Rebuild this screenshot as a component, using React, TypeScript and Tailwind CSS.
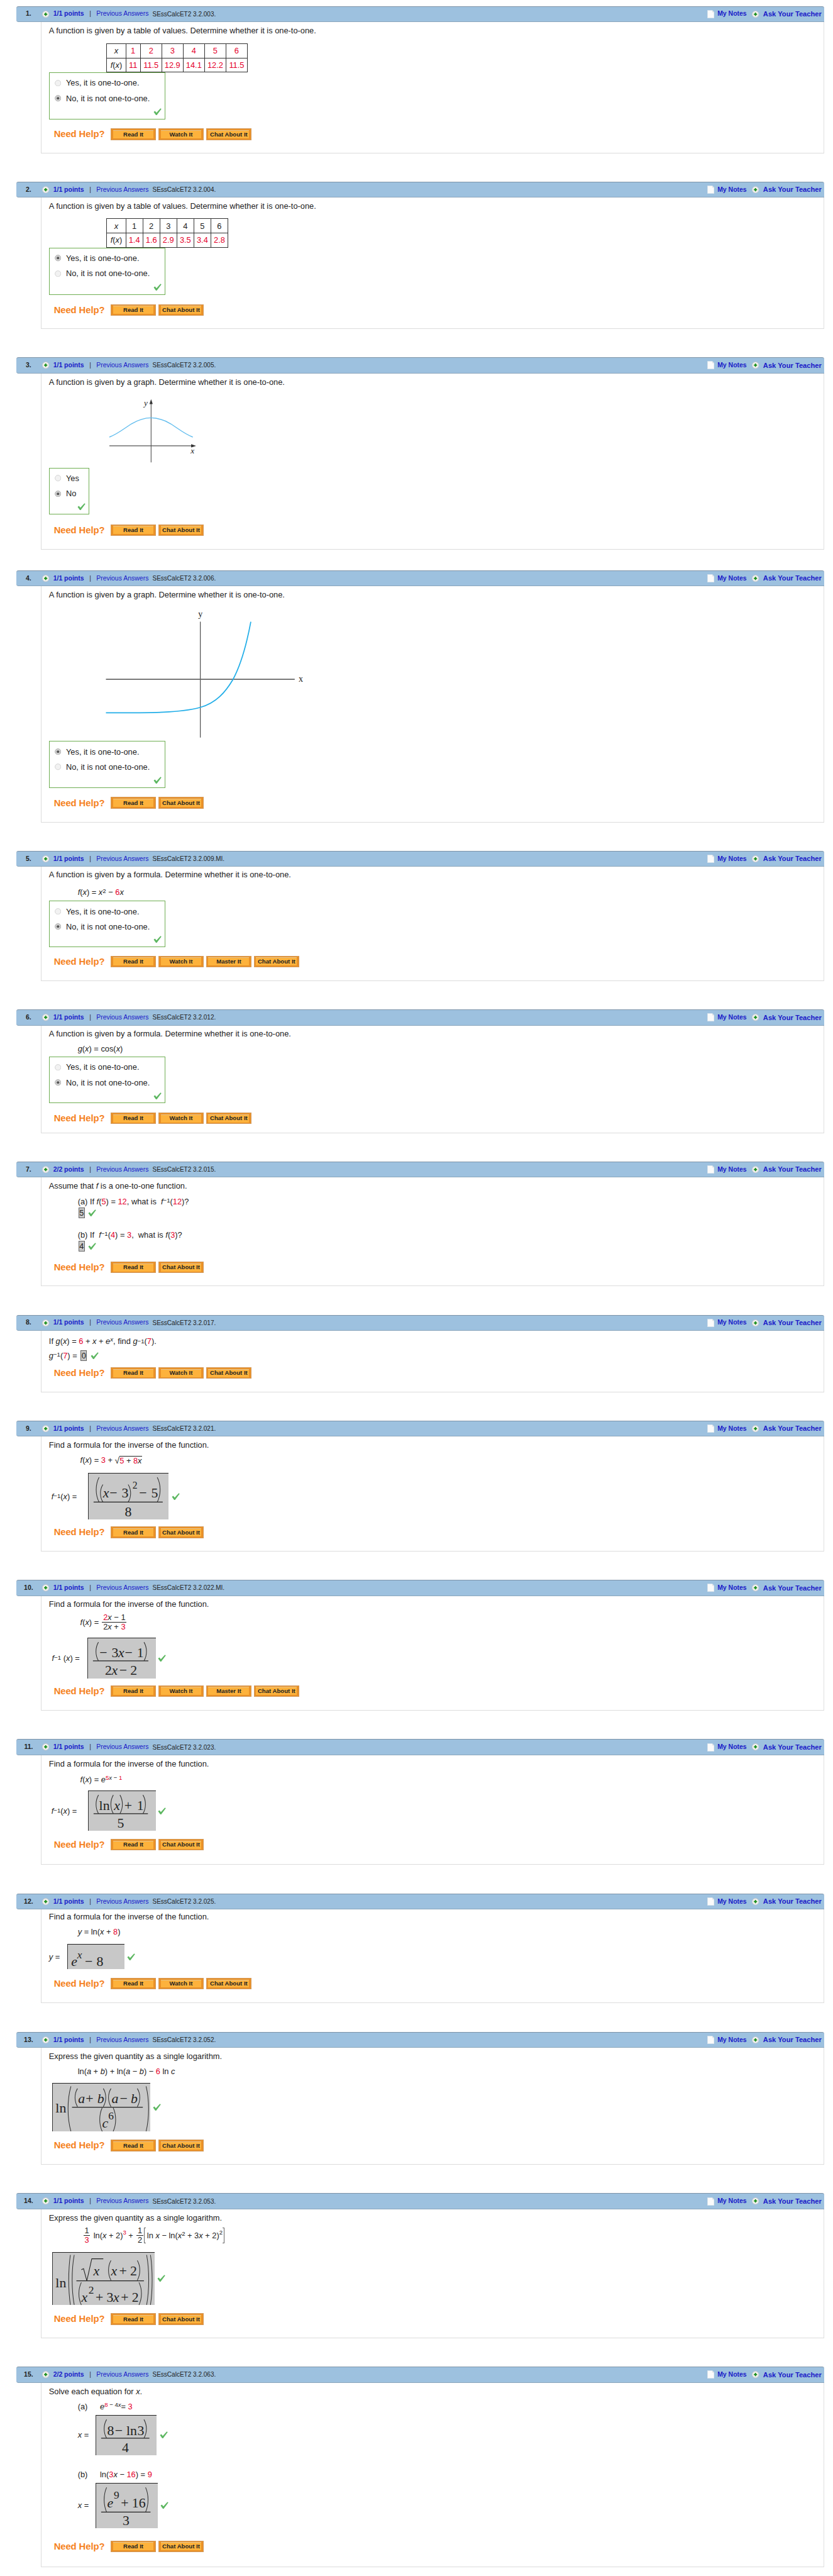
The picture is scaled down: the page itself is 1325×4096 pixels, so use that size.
import React, { FC, ReactNode } from "react";

const R: FC<{ children: ReactNode }> = ({ children }) => <span className="text-[#e4002b]">{children}</span>;
const I: FC<{ children: ReactNode }> = ({ children }) => <i>{children}</i>;

const PlusIcon = () => (
  <svg width="13" height="13" viewBox="0 0 13 13" className="shrink-0">
    <circle cx="6.5" cy="6.5" r="6" fill="#f1f1f1" stroke="#c4c4c4" />
    <path d="M6.5 3.5v6M3.5 6.5h6" stroke="#118a11" strokeWidth="2" />
  </svg>
);

const NoteIcon = () => (
  <svg width="13" height="15" viewBox="0 0 13 15" className="shrink-0">
    <path d="M0.5 0.5H9L12.5 4V14.5H0.5Z" fill="#fbfbfb" stroke="#d8e2ea" />
    <path d="M9 0.5V4H12.5" fill="#e4e4e4" />
  </svg>
);

const Check = () => (
  <svg width="15" height="13" viewBox="0 0 15 13" className="shrink-0">
    <path d="M0.5 7L3 5.3L5.6 8.2L13 0.3L14.6 1.4L6.2 12.6H4.6Z" fill="#5db761" />
  </svg>
);

const Radio: FC<{ on?: boolean }> = ({ on }) => (
  <svg width="12" height="12" viewBox="0 0 12 12" className="shrink-0">
    <circle cx="6" cy="6" r="5.3" fill={on ? "#d2d2d2" : "#f2f2f2"} stroke={on ? "#a8a8a8" : "#cfcfcf"} />
    {on && <circle cx="6" cy="6" r="2.4" fill="#555" />}
  </svg>
);

const Choices: FC<{ items: string[]; selected: number; className?: string }> = ({ items, selected, className = "" }) => (
  <div className={`relative border border-[#6fae52] pl-[9px] pt-[8px] ${className}`}>
    {items.map((t, i) => (
      <div key={t} className={`flex h-[20px] items-center gap-[9px] ${i > 0 ? "mt-[8px]" : ""}`}>
        <Radio on={i === selected} />
        <span>{t}</span>
      </div>
    ))}
    <div className="absolute bottom-[6px] right-[6px]">
      <Check />
    </div>
  </div>
);

const Help: FC<{ buttons: string[]; className?: string }> = ({ buttons, className = "" }) => (
  <div className={`ml-[9px] flex h-[21px] items-center ${className}`}>
    <span className="w-[103.5px] text-[17px] font-bold tracking-[-0.1px] text-[#f5821f]">Need Help?</span>
    <div className="flex gap-[4.5px]">
      {buttons.map((b) => (
        <div key={b} className="h-[21px] w-[82.5px] border border-[#d39a5c] bg-[#ea9127] px-[3px] py-[2px]">
          <div className="flex h-full items-center justify-center border-t border-[#e6c48f] bg-[#fdb23c] text-[11px] font-bold text-[#222]">
            {b}
          </div>
        </div>
      ))}
    </div>
  </div>
);

const Question: FC<{ num: number; pts: string; code: string; bodyClass: string; className?: string; children: ReactNode }> = ({
  num,
  pts,
  code,
  bodyClass,
  className = "mb-[52px]",
  children,
}) => (
  <div className={className}>
    <div className="flex h-[29px] items-center rounded-t-[4px] rounded-bl-[4px] border-t-2 border-b-2 border-t-[#7e94a8] border-b-[#8ba6bc] bg-[#9dc1df]">
      <span className="w-[44px] text-center text-[12px] font-bold text-[#222]">{num}.</span>
      <span className="ml-[3px]">
        <PlusIcon />
      </span>
      <span className="ml-[7px] w-[66px] text-[12px] font-bold text-[#1a1ac8]">{pts}</span>
      <span className="w-[12.5px] text-[12px] text-[#333]">|</span>
      <span className="text-[12px] text-[#1a1ac8]">Previous Answers</span>
      <span className="ml-[7px] text-[11.5px] text-[#222]">{code}</span>
      <div className="ml-auto flex items-center pr-[5px]">
        <NoteIcon />
        <span className="ml-[6px] text-[12px] font-bold text-[#1a1ac8]">My Notes</span>
        <span className="ml-[10px]">
          <PlusIcon />
        </span>
        <span className="ml-[7px] text-[12.8px] font-bold text-[#1a1ac8]">Ask Your Teacher</span>
      </div>
    </div>
    <div className={`ml-[45px] border-r border-b-2 border-l-2 border-r-[#e0e0e0] border-b-[#dcdcdc] border-l-[#dcdcdc] pl-[13px] ${bodyClass}`}>
      {children}
    </div>
  </div>
);

const Values: FC<{ x: string[]; y: string[]; wide?: boolean; x1Red?: boolean }> = ({ x, y, wide, x1Red }) => {
  const cell = "h-[26px] border border-[#333] p-0 text-center";
  return (
    <table className="ml-[105px] table-fixed border-collapse border-2 border-[#333]">
      <tbody>
        <tr>
          <td className={`${cell} w-[34.5px]`}>
            <I>x</I>
          </td>
          {x.map((v, i) => (
            <td key={v} className={`${cell} ${wide ? (i === 0 ? "w-[26.5px]" : "w-[39px]") : "w-[31px]"} ${x1Red ? "text-[#e4002b]" : ""}`}>
              {v}
            </td>
          ))}
        </tr>
        <tr>
          <td className={cell}>
            <I>f</I>(<I>x</I>)
          </td>
          {y.map((v, i) => (
            <td key={i} className={`${cell} text-[#e4002b]`}>
              {v}
            </td>
          ))}
        </tr>
      </tbody>
    </table>
  );
};

// formula pictures: coordinates are px inside the gray answer box
const T: FC<{ x: number; y: number; i?: boolean; s?: number; children: ReactNode }> = ({ x, y, i, s = 25, children }) => (
  <text x={x} y={y} fontSize={s} fontStyle={i ? "italic" : "normal"} fontFamily="Liberation Serif, serif" fill="#222">
    {children}
  </text>
);

const P: FC<{ x: number; a: number; b: number; w?: number; right?: boolean }> = ({ x, a, b, w = 6, right }) => {
  const h = b - a;
  const d = right
    ? `M${x} ${a}C${x + w} ${a + h * 0.3} ${x + w} ${a + h * 0.7} ${x} ${b}`
    : `M${x + w} ${a}C${x} ${a + h * 0.3} ${x} ${a + h * 0.7} ${x + w} ${b}`;
  return <path d={d} fill="none" stroke="#333" strokeWidth="1.2" />;
};

const L: FC<{ a: number; b: number; y: number }> = ({ a, b, y }) => <path d={`M${a} ${y}H${b}`} stroke="#222" strokeWidth="1.4" />;

const Box: FC<{ w: number; h: number; wc: string; children: ReactNode }> = ({ w, h, wc, children }) => (
  <div className={`shrink-0 border-t-2 border-l border-t-[#222] border-l-[#333] bg-[#c8c8c8] ${wc}`}>
    <svg width={w} height={h} viewBox={`0 0 ${w} ${h}`} className="block overflow-visible">
      {children}
    </svg>
  </div>
);

const Small: FC<{ children: ReactNode; className?: string }> = ({ children, className = "" }) => (
  <span className={`inline-flex h-[20px] w-[12px] items-center justify-center border border-[#666] bg-[#c8c8c8] ${className}`}>{children}</span>
);

const Inv: FC<{ g?: boolean }> = ({ g }) => (
  <>
    <I>{g ? "g" : "f"}</I>
    <sup className="top-[-2px]">−1</sup>
  </>
);

const Frac: FC<{ a: ReactNode; b: ReactNode; className?: string }> = ({ a, b, className = "" }) => (
  <span className={`mx-[2px] inline-flex flex-col items-center text-center leading-[14px] ${className}`}>
    <span className="w-full border-b border-[#222] px-[2px] pb-[1px]">{a}</span>
    <span className="pt-[1px]">{b}</span>
  </span>
);

const one = "A function is given by a table of values. Determine whether it is one-to-one.";
const graphQ = "A function is given by a graph. Determine whether it is one-to-one.";
const formulaQ = "A function is given by a formula. Determine whether it is one-to-one.";
const inverseQ = "Find a formula for the inverse of the function.";
const logQ = "Express the given quantity as a single logarithm.";
const yesNo = ["Yes, it is one-to-one.", "No, it is not one-to-one."];

const line = "h-[16px] leading-[16px]";
const eq = "ml-[52.5px] flex h-[20px] items-center whitespace-pre";

export default function App() {
  return (
    <div className="w-[1517px] pt-[11px] pr-[15px] pb-[16px] pl-[30px] font-['Liberation_Sans',sans-serif] text-[14.7px] text-[#222] [zoom:0.873]">
      <Question num={1} pts="1/1 points" code="SEssCalcET2 3.2.003." bodyClass="h-[239px]">
        <div className={`pt-[8px] ${line} box-content`}>{one}</div>
        <div className="mt-[15px]">
          <Values wide x1Red x={["1", "2", "3", "4", "5", "6"]} y={["11", "11.5", "12.9", "14.1", "12.2", "11.5"]} />
        </div>
        <Choices items={yesNo} selected={1} className="h-[85px] w-[212px]" />
        <Help className="mt-[17px]" buttons={["Read It", "Watch It", "Chat About It"]} />
      </Question>

      <Question num={2} pts="1/1 points" code="SEssCalcET2 3.2.004." bodyClass="h-[239px]">
        <div className={`pt-[8px] ${line} box-content`}>{one}</div>
        <div className="mt-[14px]">
          <Values x={["1", "2", "3", "4", "5", "6"]} y={["1.4", "1.6", "2.9", "3.5", "3.4", "2.8"]} />
        </div>
        <Choices items={yesNo} selected={0} className="h-[86px] w-[212px]" />
        <Help className="mt-[17px]" buttons={["Read It", "Chat About It"]} />
      </Question>

      <Question num={3} pts="1/1 points" code="SEssCalcET2 3.2.005." bodyClass="h-[321px]" className="mb-[38px]">
        <div className={`pt-[8px] ${line} box-content`}>{graphQ}</div>
        <svg width="165" height="118" viewBox="0 0 165 118" className="mt-[21px] ml-[110px] block overflow-visible">
          <path d="M76 8V117" stroke="#555" strokeWidth="1.3" />
          <path d="M76 2L73 11H79Z" fill="#333" />
          <path d="M0 87H150" stroke="#555" strokeWidth="1.5" />
          <path d="M158 87L149 84V90Z" fill="#333" />
          <path d="M0 71C14 66 26 56 40 47C52 40 62 36 76 36C90 36 100 40 112 47C126 56 138 66 152 71" fill="none" stroke="#62bdee" strokeWidth="1.6" />
          <T x={63} y={14} i s={15}>y</T>
          <T x={148} y={101} i s={15}>x</T>
        </svg>
        <Choices items={["Yes", "No"]} selected={1} className="mt-[9px] h-[85px] w-[74px]" />
        <Help className="mt-[18px]" buttons={["Read It", "Chat About It"]} />
      </Question>

      <Question num={4} pts="1/1 points" code="SEssCalcET2 3.2.006." bodyClass="h-[430px]">
        <div className={`pt-[8px] ${line} box-content`}>{graphQ}</div>
        <svg width="375" height="244" viewBox="0 0 375 244" className="mt-[14px] ml-[100px] block overflow-visible">
          <path d="M176 27V238" stroke="#444" strokeWidth="1.3" />
          <path d="M4 132H348" stroke="#666" strokeWidth="2" />
          <path d="M4 193C90 193 140 193 176 183C205 175 222 155 235.6 132C250 105 260 70 268 27" fill="none" stroke="#22aee8" strokeWidth="2" />
          <T x={172} y={18} s={16}>y</T>
          <T x={355} y={136} s={16}>x</T>
        </svg>
        <Choices items={yesNo} selected={0} className="h-[85px] w-[212px]" />
        <Help className="mt-[17px]" buttons={["Read It", "Chat About It"]} />
      </Question>

      <Question num={5} pts="1/1 points" code="SEssCalcET2 3.2.009.MI." bodyClass="h-[208px]">
        <div className={`pt-[7px] ${line} box-content`}>{formulaQ}</div>
        <div className={`mt-[13px] ${eq}`}>
          <I>f</I>(<I>x</I>) = <I>x</I>
          <sup className="top-[-2px]">2</sup> − <R>6</R>
          <I>x</I>
        </div>
        <Choices items={yesNo} selected={1} className="mt-[6px] h-[84px] w-[212px]" />
        <Help className="mt-[16px]" buttons={["Read It", "Watch It", "Master It", "Chat About It"]} />
      </Question>

      <Question num={6} pts="1/1 points" code="SEssCalcET2 3.2.012." bodyClass="h-[196px]">
        <div className={`pt-[7px] ${line} box-content`}>{formulaQ}</div>
        <div className={`mt-[9px] ${eq}`}>
          <I>g</I>(<I>x</I>) = cos(<I>x</I>)
        </div>
        <Choices items={yesNo} selected={1} className="mt-[5px] h-[84.5px] w-[212px]" />
        <Help className="mt-[17px]" buttons={["Read It", "Watch It", "Chat About It"]} />
      </Question>

      <Question num={7} pts="2/2 points" code="SEssCalcET2 3.2.015." bodyClass="h-[198px]">
        <div className={`pt-[8px] ${line} box-content`}>
          Assume that <I>f</I> is a one-to-one function.
        </div>
        <div className={`mt-[10px] ${eq}`}>
          (a) If <I>f</I>(<R>5</R>) = <R>12</R>, what is  <Inv />(<R>12</R>)?
        </div>
        <div className="ml-[53.5px] flex h-[20px] items-center gap-[6px]">
          <Small>5</Small>
          <Check />
        </div>
        <div className={`mt-[21px] ${eq}`}>
          (b) If  <Inv />(<R>4</R>) = <R>3</R>,  what is <I>f</I>(<R>3</R>)?
        </div>
        <div className="ml-[53.5px] flex h-[20px] items-center gap-[6px]">
          <Small>4</Small>
          <Check />
        </div>
        <Help className="mt-[18px]" buttons={["Read It", "Chat About It"]} />
      </Question>

      <Question num={8} pts="1/1 points" code="SEssCalcET2 3.2.017." bodyClass="h-[112px]">
        <div className={`pt-[12px] ${line} box-content whitespace-pre`}>
          If <I>g</I>(<I>x</I>) = <R>6</R> + <I>x</I> + <I>e</I>
          <sup>
            <I>x</I>
          </sup>
          , find <Inv g />(<R>7</R>).
        </div>
        <div className="mt-[7px] flex h-[20px] items-center whitespace-pre">
          <Inv g />(<R>7</R>) = <Small className="ml-[2px]">0</Small>
          <span className="ml-[6px]">
            <Check />
          </span>
        </div>
        <Help className="mt-[11.5px]" buttons={["Read It", "Watch It", "Chat About It"]} />
      </Question>

      <Question num={9} pts="1/1 points" code="SEssCalcET2 3.2.021." bodyClass="h-[209px]">
        <div className={`pt-[7px] ${line} box-content`}>{inverseQ}</div>
        <div className={`mt-[10px] ml-[57px] flex h-[20px] items-center whitespace-pre`}>
          <I>f</I>(<I>x</I>) = <R>3</R> + <span className="text-[16px]">√</span>
          <span className="border-t border-[#222] leading-[15px]">
            <R>5</R> + <R>8</R>
            <I>x</I>
          </span>
        </div>
        <div className="mt-[13px] ml-[4.5px] flex items-center">
          <span className="w-[66.9px] whitespace-pre">
            <Inv />(<I>x</I>) =
          </span>
          <Box w={146} h={84} wc="w-[147px]">
            <P x={12} a={7} b={52} w={7} />
            <P x={20} a={20} b={52} />
            <T x={26} y={44} i>x</T>
            <T x={38} y={44}>−</T>
            <T x={60} y={44}>3</T>
            <P x={72} a={20} b={52} right />
            <T x={80} y={28} s={18}>2</T>
            <T x={92} y={44}>−</T>
            <T x={114} y={44}>5</T>
            <P x={125} a={7} b={52} w={7} right />
            <L a={9} b={135} y={52} />
            <T x={66} y={78}>8</T>
          </Box>
          <span className="ml-[5px]">
            <Check />
          </span>
        </div>
        <Help className="mt-[12.5px]" buttons={["Read It", "Chat About It"]} />
      </Question>

      <Question num={10} pts="1/1 points" code="SEssCalcET2 3.2.022.MI." bodyClass="h-[209px]">
        <div className={`pt-[7px] ${line} box-content`}>{inverseQ}</div>
        <div className="mt-[9px] ml-[57px] flex h-[32px] items-center whitespace-pre">
          <I>f</I>(<I>x</I>) ={" "}
          <Frac
            a={
              <>
                <R>2</R>
                <I>x</I> − 1
              </>
            }
            b={
              <>
                2<I>x</I> + <R>3</R>
              </>
            }
          />
        </div>
        <div className="mt-[12px] ml-[5.5px] flex items-center">
          <span className="w-[64.9px] whitespace-pre">
            <Inv /> (<I>x</I>) =
          </span>
          <Box w={123} h={73} wc="w-[124px]">
            <P x={13} a={7} b={41} />
            <T x={21} y={34}>−</T>
            <T x={43} y={34}>3</T>
            <T x={55} y={34} i>x</T>
            <T x={67} y={34}>−</T>
            <T x={89} y={34}>1</T>
            <P x={102} a={7} b={41} right />
            <L a={9} b={110} y={41} />
            <T x={31} y={67}>2</T>
            <T x={43} y={67} i>x</T>
            <T x={57} y={67}>−</T>
            <T x={77} y={67}>2</T>
          </Box>
          <span className="ml-[4px]">
            <Check />
          </span>
        </div>
        <Help className="mt-[12.5px]" buttons={["Read It", "Watch It", "Master It", "Chat About It"]} />
      </Question>

      <Question num={11} pts="1/1 points" code="SEssCalcET2 3.2.023." bodyClass="h-[200px]">
        <div className={`pt-[8px] ${line} box-content`}>{inverseQ}</div>
        <div className="mt-[10px] ml-[57px] flex h-[20px] items-center whitespace-pre">
          <I>f</I>(<I>x</I>) = <I>e</I>
          <sup className="top-[-3px] text-[11px]">
            <R>5</R>
            <I>x</I> − <R>1</R>
          </sup>
        </div>
        <div className="mt-[11px] ml-[4.5px] flex items-center">
          <span className="w-[66.9px] whitespace-pre">
            <Inv />(<I>x</I>) =
          </span>
          <Box w={122} h={72} wc="w-[123px]">
            <P x={12} a={7} b={41} />
            <T x={19} y={34}>ln</T>
            <P x={39} a={7} b={41} />
            <T x={46} y={34} i>x</T>
            <P x={57} a={7} b={41} right />
            <T x={65} y={34}>+</T>
            <T x={88} y={34}>1</T>
            <P x={99} a={7} b={41} right />
            <L a={9} b={108} y={41} />
            <T x={52} y={66}>5</T>
          </Box>
          <span className="ml-[4px]">
            <Check />
          </span>
        </div>
        <Help className="mt-[14.5px]" buttons={["Read It", "Chat About It"]} />
      </Question>

      <Question num={12} pts="1/1 points" code="SEssCalcET2 3.2.025." bodyClass="h-[171px]">
        <div className={`pt-[6px] ${line} box-content`}>{inverseQ}</div>
        <div className={`mt-[9px] ${eq}`}>
          <I>y</I> = ln(<I>x</I> + <R>8</R>)
        </div>
        <div className="mt-[12px] flex items-center">
          <span className="w-[33.6px] whitespace-pre">
            <I>y</I> =
          </span>
          <Box w={103} h={45} wc="w-[104px]">
            <T x={6} y={39} i>e</T>
            <T x={17} y={25} i s={20}>x</T>
            <T x={31} y={39}>−</T>
            <T x={52} y={39}>8</T>
          </Box>
          <span className="ml-[5px]">
            <Check />
          </span>
        </div>
        <Help className="mt-[15.5px]" buttons={["Read It", "Watch It", "Chat About It"]} />
      </Question>

      <Question num={13} pts="1/1 points" code="SEssCalcET2 3.2.052." bodyClass="h-[213px]">
        <div className={`pt-[8px] ${line} box-content`}>{logQ}</div>
        <div className={`mt-[9px] ${eq}`}>
          ln(<I>a</I> + <I>b</I>) + ln(<I>a</I> − <I>b</I>) − <R>6</R> ln <I>c</I>
        </div>
        <div className="mt-[11px] ml-[5.5px] flex items-center">
          <Box w={178} h={87} wc="w-[179px]">
            <T x={5} y={53}>ln</T>
            <P x={26} a={5} b={87} w={7} />
            <P x={39} a={9} b={42} />
            <T x={46} y={35} i>a</T>
            <T x={60} y={35}>+</T>
            <T x={81} y={35} i>b</T>
            <P x={92} a={9} b={42} right />
            <P x={100} a={9} b={42} />
            <T x={107} y={35} i>a</T>
            <T x={122} y={35}>−</T>
            <T x={142} y={35} i>b</T>
            <P x={154} a={9} b={42} right />
            <L a={35} b={164} y={43} />
            <P x={84} a={44} b={87} />
            <T x={90} y={80} i>c</T>
            <T x={101} y={65} s={20}>6</T>
            <P x={110} a={44} b={87} right />
            <P x={170} a={5} b={87} w={6} right />
          </Box>
          <span className="ml-[5px]">
            <Check />
          </span>
        </div>
        <Help className="mt-[15.5px]" buttons={["Read It", "Chat About It"]} />
      </Question>

      <Question num={14} pts="1/1 points" code="SEssCalcET2 3.2.053." bodyClass="h-[235px]">
        <div className={`pt-[8px] ${line} box-content`}>{logQ}</div>
        <div className="mt-[9px] ml-[61px] flex h-[30px] items-center whitespace-pre">
          <Frac a="1" b={<R>3</R>} /> ln(<I>x</I> + 2)
          <sup className="top-[-5px]">
            <R>3</R>
          </sup>
          {" + "}
          <Frac a="1" b="2" />
          <span className="mr-[2px] h-[28px] w-[3px] border-y border-l border-[#666]" />
          ln <I>x</I> − ln(<I>x</I>
          <sup className="top-[-3px]">2</sup> + 3<I>x</I> + 2)
          <sup className="top-[-5px]">2</sup>
          <span className="h-[28px] w-[3px] border-y border-r border-[#666]" />
        </div>
        <div className="mt-[15px] ml-[5.5px] flex items-center">
          <Box w={186} h={95} wc="w-[187px]">
            <T x={5} y={63}>ln</T>
            <P x={28} a={4} b={95} w={4} />
            <P x={34} a={4} b={95} w={5} />
            <path d="M52 31L56 29L62 51L71 11H92" fill="none" stroke="#222" strokeWidth="1.2" />
            <T x={74} y={41} i>x</T>
            <P x={100} a={14} b={50} />
            <T x={106} y={41} i>x</T>
            <T x={121} y={41}>+</T>
            <T x={141} y={41}>2</T>
            <P x={154} a={14} b={50} right />
            <L a={43} b={166} y={51} />
            <P x={46} a={54} b={95} />
            <T x={52} y={89} i>x</T>
            <T x={65} y={74} s={20}>2</T>
            <T x={78} y={89}>+</T>
            <T x={98} y={89}>3</T>
            <T x={110} y={89} i>x</T>
            <T x={124} y={89}>+</T>
            <T x={144} y={89}>2</T>
            <P x={157} a={54} b={95} right />
            <P x={171} a={4} b={95} w={5} right />
            <P x={178} a={4} b={95} w={4} right />
          </Box>
          <span className="ml-[5px]">
            <Check />
          </span>
        </div>
        <Help className="mt-[15.5px]" buttons={["Read It", "Chat About It"]} />
      </Question>

      <Question num={15} pts="2/2 points" code="SEssCalcET2 3.2.063." bodyClass="h-[336px]" className="">
        <div className={`pt-[8px] ${line} box-content`}>
          Solve each equation for <I>x</I>.
        </div>
        <div className={`mt-[10px] ${eq}`}>
          <span className="w-[40.5px]">(a)</span>
          <I>e</I>
          <sup className="top-[-3px] text-[11px]">
            <R>8</R> − 4<I>x</I>
          </sup>{" "}
          = <R>3</R>
        </div>
        <div className="mt-[5px] ml-[52.5px] flex items-center">
          <span className="w-[33px] whitespace-pre">
            <I>x</I> =
          </span>
          <Box w={110} h={72} wc="w-[111px]">
            <P x={13} a={7} b={41} />
            <T x={20} y={35}>8</T>
            <T x={34} y={35}>−</T>
            <T x={55} y={35}>ln</T>
            <T x={75} y={35}>3</T>
            <P x={87} a={7} b={41} right />
            <L a={9} b={97} y={41} />
            <T x={47} y={66}>4</T>
          </Box>
          <span className="ml-[5px]">
            <Check />
          </span>
        </div>
        <div className={`mt-[24.7px] ${eq}`}>
          <span className="w-[40.5px]">(b)</span>
          ln(<R>3</R>
          <I>x</I> − <R>16</R>) = <R>9</R>
        </div>
        <div className="mt-[5.6px] ml-[52.5px] flex items-center">
          <span className="w-[33px] whitespace-pre">
            <I>x</I> =
          </span>
          <Box w={112} h={82} wc="w-[113px]">
            <P x={13} a={7} b={52} />
            <T x={20} y={44} i>e</T>
            <T x={32} y={28} s={20}>9</T>
            <T x={45} y={44}>+</T>
            <T x={65} y={44}>16</T>
            <P x={90} a={7} b={52} right />
            <L a={9} b={99} y={52} />
            <T x={48} y={76}>3</T>
          </Box>
          <span className="ml-[5px]">
            <Check />
          </span>
        </div>
        <Help className="mt-[22px]" buttons={["Read It", "Chat About It"]} />
      </Question>
    </div>
  );
}
